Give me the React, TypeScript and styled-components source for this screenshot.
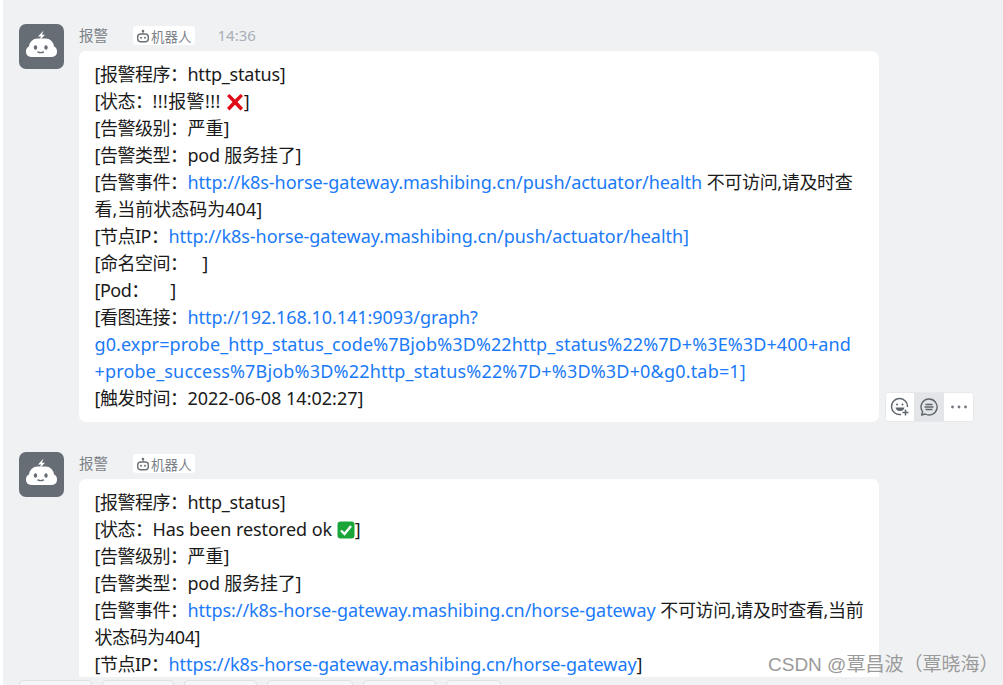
import { type ReactNode } from 'react';
import styled, { createGlobalStyle } from 'styled-components';

const GlobalStyle = createGlobalStyle`
  html, body {
    margin: 0;
    padding: 0;
    background: #ffffff;
    font-family: "Noto Sans", "Noto Sans CJK SC", sans-serif;
  }
`;

const Page = styled.div`
  position: relative;
  width: 1003px;
  height: 685px;
  overflow: hidden;
  padding-left: 3px;
  box-sizing: border-box;
`;

const Chat = styled.div`
  height: 685px;
  background: #f0f1f3;
  display: flex;
  flex-direction: column;
`;

const MessageList = styled.div`
  height: 677px;
  flex: none;
  overflow: hidden;
  padding: 24px 0 0 16px;
  box-sizing: border-box;
`;

const Message = styled.div`
  position: relative;
  display: flex;
  gap: 15px;
  margin-bottom: 30px;
  width: 860px;
`;

const Avatar = styled.div`
  width: 45px;
  height: 45px;
  border-radius: 7px;
  background: #666d75;
  flex: none;
`;

const Body = styled.div`
  width: 800px;
`;

const Header = styled.div`
  height: 27px;
  display: flex;
  align-items: flex-start;
  font-size: 14.5px;
`;

const Name = styled.span`
  color: #7d8288;
  line-height: 22px;
  width: 54px;
`;

const RobotTag = styled.span`
  display: flex;
  align-items: center;
  gap: 1px;
  height: 19px;
  margin-top: 2px;
  padding: 0 3px;
  border-radius: 3px;
  background: #ffffff;
  color: #7d8288;
  font-size: 13.5px;
  margin-right: 23px;
`;

const Time = styled.span`
  color: #a9afb6;
  line-height: 22px;
  font-size: 15px;
`;

const Bubble = styled.div`
  background: #ffffff;
  border-radius: 7px;
  padding: 10px 16px 10px 15.5px;
  font-size: 18px;
  line-height: 27px;
  color: #1a1a1a;
`;

const Line = styled.div`
  white-space: nowrap;
`;

// lead label such as [告警级别: the brackets run narrower in the reference
const Label = styled.span`
  letter-spacing: -0.5px;
`;

const Tight = styled.span<{ $tracking: number }>`
  letter-spacing: ${(p) => p.$tracking}px;
`;

const Link = styled.a<{ $tracking?: number }>`
  color: #1a7af8;
  text-decoration: none;
  letter-spacing: ${(p) => p.$tracking ?? -0.05}px;
`;

const Emoji = styled.svg`
  vertical-align: -3px;
`;

const Toolbar = styled.div`
  position: absolute;
  right: -95px;
  top: 368px;
  display: flex;
  height: 30px;
  background: #ffffff;
  border: 1px solid #e6e8eb;
  border-radius: 4px;
  box-sizing: border-box;
  overflow: hidden;
`;

const ToolButton = styled.div<{ $active?: boolean; $width: number }>`
  width: ${(p) => p.$width}px;
  display: flex;
  align-items: center;
  justify-content: center;
  background: ${(p) => (p.$active ? '#e3e5e8' : '#ffffff')};
`;

const BottomBar = styled.div`
  display: flex;
  gap: 10px;
  padding: 3px 0 0 16px;
`;

const BarButton = styled.div<{ $width: number }>`
  width: ${(p) => p.$width}px;
  height: 20px;
  flex: none;
  box-sizing: border-box;
  background: #f5f6f7;
  border: 1px solid #dfe1e5;
  border-radius: 4px;
`;

const Watermark = styled.div`
  position: absolute;
  left: 768px;
  top: 653px;
  font-family: "Liberation Sans", "Noto Sans CJK SC", sans-serif;
  font-size: 19px;
  line-height: 24px;
  color: #9a9a9a;
  white-space: nowrap;
`;

const BotAvatarIcon = () => (
  <svg width="45" height="45" viewBox="0 0 45 45" display="block">
    <path d="M24.5 6.5 19 12.5h3l-1.500 4 5.500-5.800h-3z" fill="#ffffff" />
    <rect x="10" y="14.500" width="25" height="18.500" rx="8.500" fill="#ffffff" />
    <rect x="7" y="22" width="31" height="11" rx="5" fill="#ffffff" />
    <ellipse cx="16.500" cy="23.500" rx="1.700" ry="2.300" fill="#666d75" />
    <ellipse cx="27" cy="23.500" rx="1.700" ry="2.300" fill="#666d75" />
    <path d="M19 28q2.700 1.300 5.400 0" stroke="#666d75" strokeWidth="1.400" fill="none" strokeLinecap="round" />
  </svg>
);

const BotTagIcon = () => (
  <svg width="14" height="14" viewBox="0 0 14 14" fill="none">
    <circle cx="7" cy="2" r="1.300" fill="#6d7278" />
    <path d="M7 3v2" stroke="#6d7278" />
    <rect x="1.700" y="5" width="10.600" height="7.800" rx="3" stroke="#6d7278" strokeWidth="1.400" />
    <circle cx="5" cy="8.700" r="1" fill="#6d7278" />
    <circle cx="9" cy="8.700" r="1" fill="#6d7278" />
  </svg>
);

const CrossEmoji = () => (
  <Emoji width="18" height="18" viewBox="0 0 18 18">
    <path d="M1 3 3.500 1 9 6.500 14.500 1 17 3 11.500 9l5.500 6-2.500 2.500L9 11.800l-5.500 5.700L1 15l5.500-6z" fill="#e00b16" />
  </Emoji>
);

const CheckEmoji = () => (
  <Emoji width="18" height="18" viewBox="0 0 18 18">
    <rect x="0.500" y="0.500" width="17" height="17" rx="3" fill="#19a538" />
    <path d="M4 9.500 7.500 13 14 5" stroke="#ffffff" strokeWidth="2.400" fill="none" />
  </Emoji>
);

const ReactIcon = () => (
  <svg width="20" height="20" viewBox="0 0 20 20" fill="none" stroke="#5f656b" strokeWidth="1.400">
    <path d="M17.500 9.500A8 8 0 1 0 10.500 17.500" strokeLinecap="round" />
    <circle cx="7" cy="7.500" r="1" fill="#5f656b" stroke="none" />
    <circle cx="12.500" cy="7.500" r="1" fill="#5f656b" stroke="none" />
    <path d="M5.500 10.500h9a4.500 4.500 0 0 1-4.500 3.500 4.500 4.500 0 0 1-4.500-3.500z" fill="#5f656b" stroke="none" />
    <path d="M15.500 12.500v6M12.500 15.500h6" strokeWidth="1.500" />
  </svg>
);

const CommentIcon = () => (
  <svg width="20" height="20" viewBox="0 0 20 20" fill="none" stroke="#5f656b" strokeWidth="1.400">
    <path d="M10 2a8 8 0 1 1-3.800 15L2.600 18l1-3.300A8 8 0 0 1 10 2z" strokeLinejoin="round" />
    <path d="M6.500 7.500h7M5.500 10h9M6.500 12.500h7" />
  </svg>
);

const DotsIcon = () => (
  <svg width="18" height="4" viewBox="0 0 18 4" fill="#73787e">
    <circle cx="2.500" cy="2" r="1.400" />
    <circle cx="9" cy="2" r="1.400" />
    <circle cx="15.500" cy="2" r="1.400" />
  </svg>
);

// full-width colon, written as an escape so it stays the CJK glyph
const C = '\uff1a';
const firstUrl = 'http://k8s-horse-gateway.mashibing.cn/push/actuator/health';
const secondUrl = 'https://k8s-horse-gateway.mashibing.cn/horse-gateway';

const firstLines: ReactNode[] = [
  <><Label>{`[报警程序${C}`}</Label><Tight $tracking={-0.2}>http_status]</Tight></>,
  <><Label>{`[状态${C}`}</Label><Tight $tracking={0.4}>!!!报警!!! </Tight><CrossEmoji />]</>,
  <><Label>{`[告警级别${C}`}</Label>严重]</>,
  <><Label>{`[告警类型${C}`}</Label><Tight $tracking={-0.2}>pod 服务挂了]</Tight></>,
  <><Label>{`[告警事件${C}`}</Label><Link>{firstUrl}</Link> <Tight $tracking={-0.35}>不可访问,请及时查</Tight></>,
  '看,当前状态码为404]',
  <><Label>{`[节点IP${C}`}</Label><Link>{firstUrl}]</Link></>,
  <><Label>{`[命名空间${C}`}</Label><Tight $tracking={0.3}>{'\u00a0\u00a0\u00a0]'}</Tight></>,
  <><Label>{`[Pod${C}`}</Label><Tight $tracking={0.7}>{'\u00a0\u00a0\u00a0\u00a0]'}</Tight></>,
  <><Label>{`[看图连接${C}`}</Label><Link>http://192.168.10.141:9093/graph?</Link></>,
  <Link $tracking={0.09}>g0.expr=probe_http_status_code%7Bjob%3D%22http_status%22%7D+%3E%3D+400+and</Link>,
  <Link $tracking={0.18}>+probe_success%7Bjob%3D%22http_status%22%7D+%3D%3D+0&amp;g0.tab=1]</Link>,
  <><Label>{`[触发时间${C}`}</Label>2022-06-08 14:02:27]</>,
];

const secondLines: ReactNode[] = [
  <><Label>{`[报警程序${C}`}</Label><Tight $tracking={-0.2}>http_status]</Tight></>,
  <><Label>{`[状态${C}`}</Label><Tight $tracking={-0.05}>Has been restored ok</Tight> <CheckEmoji />]</>,
  <><Label>{`[告警级别${C}`}</Label>严重]</>,
  <><Label>{`[告警类型${C}`}</Label><Tight $tracking={-0.2}>pod 服务挂了]</Tight></>,
  <><Label>{`[告警事件${C}`}</Label><Link>{secondUrl}</Link> <Tight $tracking={-0.35}>不可访问,请及时查看,当前</Tight></>,
  <Tight $tracking={-0.4}>状态码为404]</Tight>,
  <><Label>{`[节点IP${C}`}</Label><Link>{secondUrl}</Link>]</>,
];

const barButtons = [73, 72, 73, 86, 73, 55];

const AlarmMessage = ({ lines, time, children }: { lines: ReactNode[]; time?: string; children?: ReactNode }) => (
  <Message>
    <Avatar>
      <BotAvatarIcon />
    </Avatar>
    <Body>
      <Header>
        <Name>报警</Name>
        <RobotTag>
          <BotTagIcon />
          机器人
        </RobotTag>
        {time && <Time>{time}</Time>}
      </Header>
      <Bubble>
        {lines.map((line, i) => (
          <Line key={i}>{line}</Line>
        ))}
      </Bubble>
    </Body>
    {children}
  </Message>
);

export default function App() {
  return (
    <Page>
      <GlobalStyle />
      <Chat>
        <MessageList>
          <AlarmMessage lines={firstLines} time="14:36">
            <Toolbar>
              <ToolButton $width={28}>
                <ReactIcon />
              </ToolButton>
              <ToolButton $width={30} $active>
                <CommentIcon />
              </ToolButton>
              <ToolButton $width={29}>
                <DotsIcon />
              </ToolButton>
            </Toolbar>
          </AlarmMessage>
          <AlarmMessage lines={secondLines} />
        </MessageList>
        <BottomBar>
          {barButtons.map((w, i) => (
            <BarButton key={i} $width={w} />
          ))}
        </BottomBar>
      </Chat>
      <Watermark>{'CSDN @覃昌波\uff08覃晓海\uff09'}</Watermark>
    </Page>
  );
}
